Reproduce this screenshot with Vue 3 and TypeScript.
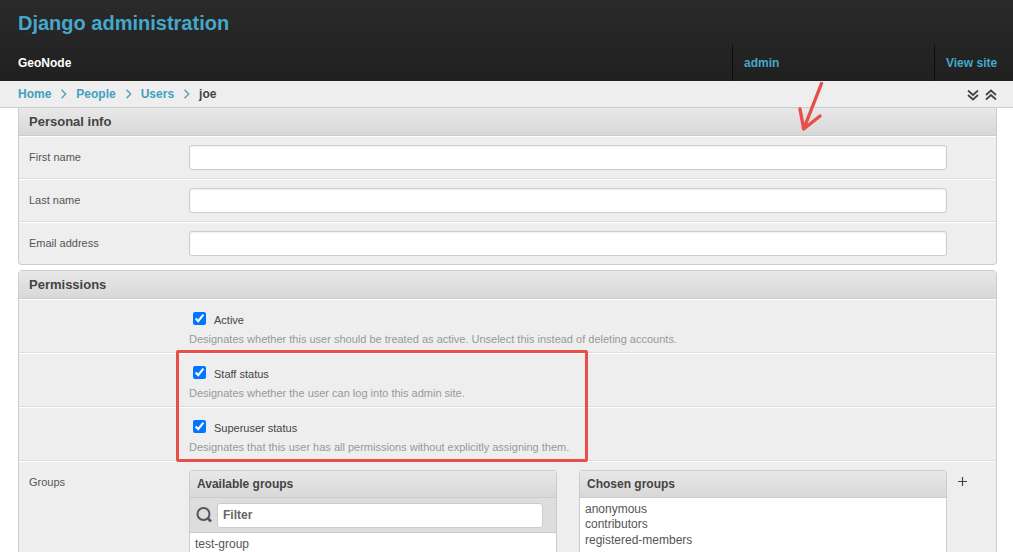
<script setup lang="ts">
interface Row { label: string; }
const nameRows: Row[] = [{ label: 'First name' }, { label: 'Last name' }, { label: 'Email address' }];
const checks = [
  { label: 'Active', help: 'Designates whether this user should be treated as active. Unselect this instead of deleting accounts.' },
  { label: 'Staff status', help: 'Designates whether the user can log into this admin site.' },
  { label: 'Superuser status', help: 'Designates that this user has all permissions without explicitly assigning them.' },
];
const chosen = ['anonymous', 'contributors', 'registered-members'];
</script>

<template>
  <div class="page">
    <header class="header">
      <h1 class="brand">Django administration</h1>
      <nav class="topnav">
        <span class="site">GeoNode</span>
        <a class="tn admin">admin</a>
        <a class="tn view">View site</a>
      </nav>
    </header>
    <div class="crumbs">
      <a>Home</a>
      <svg class="sep" width="8" height="10" viewBox="0 0 8 10"><path d="M1.500 .8l4.200 4.200-4.200 4.200" fill="none" stroke="#5a9db5" stroke-width="1.400"/></svg>
      <a>People</a>
      <svg class="sep" width="8" height="10" viewBox="0 0 8 10"><path d="M1.500 .8l4.200 4.200-4.200 4.200" fill="none" stroke="#5a9db5" stroke-width="1.400"/></svg>
      <a>Users</a>
      <svg class="sep" width="8" height="10" viewBox="0 0 8 10"><path d="M1.500 .8l4.200 4.200-4.200 4.200" fill="none" stroke="#5a9db5" stroke-width="1.400"/></svg>
      <b>joe</b>
      <span class="toggles">
        <svg width="12" height="12" viewBox="0 0 12 12"><path d="M1 1.500l5 4.500 5-4.500M1 6l5 4.500 5-4.500" fill="none" stroke="#444" stroke-width="1.700"/></svg>
        <svg width="12" height="12" viewBox="0 0 12 12"><path d="M1 6l5-4.500 5 4.500M1 10.500l5-4.500 5 4.500" fill="none" stroke="#444" stroke-width="1.700"/></svg>
      </span>
    </div>
    <main class="content">
      <section class="module first">
        <h2 class="mhead">Personal info</h2>
        <div v-for="r in nameRows" :key="r.label" class="row">
          <label class="lbl">{{ r.label }}</label>
          <input class="text" type="text" />
        </div>
      </section>
      <section class="module second">
        <h2 class="mhead">Permissions</h2>
        <div v-for="c in checks" :key="c.label" class="chk">
          <div class="chk-line">
            <input type="checkbox" checked class="box" />
            <span class="chk-label">{{ c.label }}</span>
          </div>
          <p class="help">{{ c.help }}</p>
        </div>
        <div class="groups">
          <label class="lbl glbl">Groups</label>
          <div class="sel">
            <h3 class="sel-head">Available groups</h3>
            <div class="filter">
              <svg class="lens" width="18" height="18" viewBox="0 0 18 18"><circle cx="7.500" cy="8" r="6" fill="none" stroke="#555" stroke-width="2"/><path d="M12 12.500l3 3" stroke="#555" stroke-width="2.600"/></svg>
              <input class="ftext" placeholder="Filter" />
            </div>
            <ul class="list"><li>test-group</li></ul>
          </div>
          <div class="sel chosen">
            <h3 class="sel-head">Chosen groups</h3>
            <ul class="list"><li v-for="g in chosen" :key="g">{{ g }}</li></ul>
          </div>
          <svg class="plus" width="9" height="9" viewBox="0 0 9 9"><path d="M4.500 0v9M0 4.500h9" stroke="#444" stroke-width="1.200"/></svg>
        </div>
      </section>
    </main>
    <div class="redbox"></div>
    <svg class="arrow" width="30" height="54" viewBox="0 0 30 54"><path d="M23.500 1.500L5.700 47M2 27l3.700 20 16.300-13" fill="none" stroke="#e94f4a" stroke-width="3.400" stroke-linecap="round" stroke-linejoin="round"/></svg>
  </div>
</template>

<style>
html, body { margin: 0; overflow: hidden; background: #fff; }
</style>

<style scoped>
.page { position: relative; height: 552px; overflow: hidden; font-family: "Liberation Sans", Arial, sans-serif; font-size: 11px; color: #444; }
.header { height: 81px; background: linear-gradient(#2a2a2a, #202020); box-sizing: border-box; padding-top: 11px; }
.brand { margin: 0 0 0 18px; font-size: 20px; line-height: 25px; font-weight: bold; color: #45a8ca; }
.topnav { display: flex; align-items: stretch; height: 36px; margin-top: 9px; font-size: 12px; font-weight: bold; }
.site { color: #fff; padding-left: 18px; line-height: 36px; flex: 0 0 732px; box-sizing: border-box; }
.tn { color: #45a8ca; line-height: 36px; border-left: 1px solid #0c0c0c; box-sizing: border-box; padding-left: 11px; }
.admin { flex: 0 0 202px; }
.view { flex: 1; }
.crumbs { height: 26px; background: #eee; border-bottom: 1px solid #ccc; display: flex; align-items: center; padding-left: 18px; font-size: 12px; font-weight: bold; box-sizing: content-box; position: relative; }
.crumbs a { color: #3f9fc1; }
.crumbs b { color: #444; }
.sep { margin: 0 8px 0 9px; }
.toggles { position: absolute; right: 16px; top: 8px; display: flex; gap: 6px; }
.content { padding: 0 16px 0 18px; }
.module { border: 1px solid #ccc; background: #eee; box-sizing: border-box; }
.module.first { border-top: 0; border-radius: 0 0 4px 4px; height: 157px; }
.module.second { margin-top: 5px; border-radius: 4px 4px 0 0; }
.mhead { margin: 0; height: 27px; line-height: 27px; padding-left: 10px; font-size: 13px; font-weight: bold; color: #444; background: linear-gradient(#e8e8e8, #d8d8d8); border-bottom: 1px solid #ccc; box-shadow: 0 1px 0 #fff; }
.row { display: flex; align-items: center; height: 43px; box-sizing: border-box; border-bottom: 1px solid #ddd; box-shadow: 0 1px 0 #fff; padding-left: 10px; }
.row:last-child { border-bottom: 0; box-shadow: none; padding-bottom: 1px; }
.lbl { width: 160px; font-size: 11px; color: #555; }
.text { width: 758px; height: 25px; box-sizing: border-box; border: 1px solid #ccc; border-radius: 3px; background: #fff; box-shadow: inset 0 1px 2px #eee; outline: 0; }
.chk { height: 54px; box-sizing: border-box; border-bottom: 1px solid #ddd; box-shadow: 0 1px 0 #fff; padding: 13px 0 0 170px; }
.chk-line { display: flex; align-items: center; height: 14px; }
.box { width: 13px; height: 13px; margin: -1px 8px 0 4px; accent-color: #0075ff; }
.chk-label { font-size: 11px; color: #444; position: relative; top: 1px; }
.help { margin: 6px 0 0; font-size: 11px; line-height: 14px; color: #999; }
.groups { display: flex; align-items: flex-start; padding: 9px 0 0 10px; position: relative; }
.glbl { padding-top: 6px; }
.sel { width: 368px; border: 1px solid #ccc; border-radius: 3px 3px 0 0; background: #fff; box-sizing: border-box; height: 200px; }
.sel.chosen { margin-left: 22px; }
.sel-head { margin: 0; height: 27px; line-height: 26px; padding-left: 7px; font-size: 12px; font-weight: bold; color: #444; background: linear-gradient(#e8e8e8, #d8d8d8); border-bottom: 1px solid #ccc; box-sizing: border-box; }
.filter { display: flex; align-items: center; gap: 3px; height: 35px; box-sizing: border-box; padding: 0 13px 0 6px; background: #ddd; border-bottom: 1px solid #ccc; }
.ftext { flex: 1; min-width: 0; height: 25px; box-sizing: border-box; border: 1px solid #ccc; border-radius: 3px; padding-left: 5px; font: bold 12px "Liberation Sans", sans-serif; outline: 0; }
.ftext::placeholder { color: #666; opacity: 1; }
.list { list-style: none; margin: 0; padding: 3.600px 5px; font-size: 12px; line-height: 15.500px; color: #555; }
.plus { margin: 7px 0 0 11px; }
.redbox { position: absolute; left: 176px; top: 350px; width: 412px; height: 112px; box-sizing: border-box; border: 3px solid #e94f4a; border-radius: 2px; }
.arrow { position: absolute; left: 798px; top: 82px; }
</style>
